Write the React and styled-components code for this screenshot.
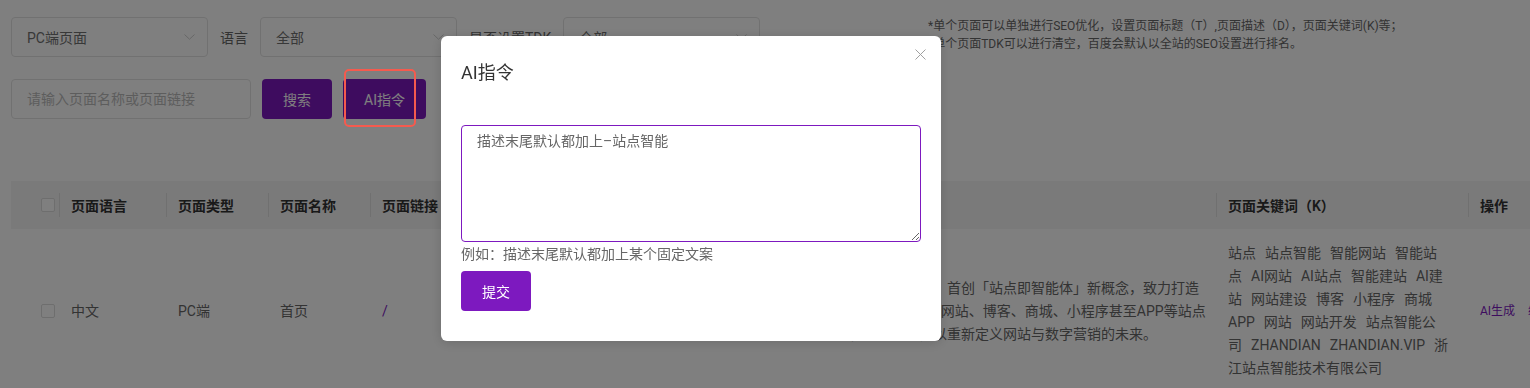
import React from 'react';
import styled, { createGlobalStyle } from 'styled-components';

const PURPLE = '#7d19bf';

const GlobalStyle = createGlobalStyle`
  html, body { margin: 0; padding: 0; background: #fff; overflow: hidden; }
  body { font-family: Roboto, "Noto Sans CJK SC", sans-serif; color: #666; }
  * { box-sizing: border-box; }
`;

const keywords = [
  '站点', '站点智能', '智能网站', '智能站点', 'AI网站', 'AI站点', '智能建站', 'AI建站',
  '网站建设', '博客', '小程序', '商城', 'APP', '网站', '网站开发', '站点智能公司',
  'ZHANDIAN', 'ZHANDIAN.VIP', '浙江站点智能技术有限公司',
];

// line breaks follow the way the cell wraps on the live page
const description = [
  '浙江站点智能技术有限公司旗下站点智能，首创「站点即智能体」新概念，致力打造',
  '以智能体为核心的第5代建站平台，让企业网站、博客、商城、小程序甚至APP等站点',
  '升级为可自主运营、持续进化的智能体，以重新定义网站与数字营销的未来。',
].join('\n');

function Chevron() {
  return (
    <svg width="11" height="6" viewBox="0 0 11 6" fill="none">
      <path d="M0.5 0.5L5.5 5.2L10.5 0.5" stroke="#cfcfcf" strokeWidth="1" />
    </svg>
  );
}

export default function App() {
  return (
    <>
      <GlobalStyle />
      <Page>
        <TopArea>
          <Filters>
            <FilterRow>
              <Select>PC端页面<Chevron /></Select>
              <Label>语言</Label>
              <Select>全部<Chevron /></Select>
              <Label>是否设置TDK</Label>
              <Select>全部<Chevron /></Select>
            </FilterRow>
            <SearchRow>
              <SearchInput placeholder="请输入页面名称或页面链接" />
              <PurpleButton $width={70}>搜索</PurpleButton>
              <PurpleButton $width={83}>AI指令</PurpleButton>
            </SearchRow>
          </Filters>
          <Notes>
            <div>*单个页面可以单独进行SEO优化，设置页面标题（T）,页面描述（D），页面关键词(K)等；</div>
            <div>*单个页面TDK可以进行清空，百度会默认以全站的SEO设置进行排名。</div>
          </Notes>
        </TopArea>

        <Table>
          <colgroup>
            <col style={{ width: 48 }} />
            <col style={{ width: 107 }} />
            <col style={{ width: 102 }} />
            <col style={{ width: 102 }} />
            <col style={{ width: 130 }} />
            <col style={{ width: 169 }} />
            <col style={{ width: 547 }} />
            <col style={{ width: 252 }} />
            <col style={{ width: 130 }} />
          </colgroup>
          <thead>
            <tr>
              <CheckTh><Checkbox /></CheckTh>
              <Th>页面语言</Th>
              <Th>页面类型</Th>
              <Th>页面名称</Th>
              <Th>页面链接</Th>
              <Th>页面标题（T）</Th>
              <Th>页面描述（D）</Th>
              <Th>页面关键词（K）</Th>
              <Th>操作</Th>
            </tr>
          </thead>
          <tbody>
            <tr>
              <CheckTd><Checkbox /></CheckTd>
              <Td>中文</Td>
              <Td>PC端</Td>
              <Td>首页</Td>
              <Td><LinkText>/</LinkText></Td>
              <Td>站点智能</Td>
              <DescTd>{description}</DescTd>
              <KeywordTd>
                {keywords.map((k) => (
                  <Keyword key={k}>{k}</Keyword>
                ))}
              </KeywordTd>
              <Td>
                <Action>AI生成</Action>
                <Action>编辑</Action>
              </Td>
            </tr>
          </tbody>
        </Table>
      </Page>

      <Mask>
        <Modal>
          <CloseButton aria-label="关闭">
            <svg width="11" height="11" viewBox="0 0 11 11">
              <path d="M0.5 0.5L10.5 10.5M10.5 0.5L0.5 10.5" stroke="#a0a0a0" strokeWidth="1" />
            </svg>
          </CloseButton>
          <ModalTitle>AI指令</ModalTitle>
          <Textarea defaultValue="描述末尾默认都加上–站点智能" />
          <Hint>例如：描述末尾默认都加上某个固定文案</Hint>
          <SubmitButton>提交</SubmitButton>
        </Modal>
      </Mask>

      <Highlight />
    </>
  );
}

const Page = styled.div`
  padding: 17px 0 0 11px;
  width: 1700px;
`;

const TopArea = styled.div`
  display: flex;
  align-items: flex-start;
`;

const Filters = styled.div`
  flex: 0 0 917px;
  display: flex;
  flex-direction: column;
  gap: 22px;
`;

const FilterRow = styled.div`
  display: flex;
  align-items: center;
`;

const Select = styled.div`
  width: 197px;
  height: 40px;
  border: 1px solid #e2e2e2;
  border-radius: 4px;
  display: flex;
  align-items: center;
  justify-content: space-between;
  padding: 0 12px 0 15px;
  font-size: 14px;
  color: #707070;
  background: #fff;
`;

const Label = styled.span`
  margin: 0 12px;
  font-size: 14px;
  color: #666;
`;

const SearchRow = styled.div`
  display: flex;
  gap: 11px;
`;

const SearchInput = styled.input`
  width: 240px;
  height: 40px;
  border: 1px solid #e2e2e2;
  border-radius: 4px;
  padding: 0 15px;
  font-family: inherit;
  font-size: 14px;
  color: #666;
  outline: none;
  &::placeholder { color: #bbb; }
`;

const PurpleButton = styled.button`
  width: ${(p) => p.$width}px;
  height: 40px;
  border: none;
  border-radius: 4px;
  background: ${PURPLE};
  color: #fff;
  font-family: inherit;
  font-size: 14px;
`;

const Notes = styled.div`
  font-size: 12px;
  line-height: 18px;
  color: #666;
`;

const Table = styled.table`
  margin-top: 62px;
  width: 1587px;
  table-layout: fixed;
  border-collapse: collapse;
`;

const Th = styled.th`
  position: relative;
  height: 48px;
  padding: 0 12px;
  background: #f5f5f5;
  text-align: left;
  font-size: 14px;
  font-weight: 600;
  color: #333;
  white-space: nowrap;
  overflow: hidden;
  &::before {
    content: '';
    position: absolute;
    left: 0;
    top: 12px;
    width: 1px;
    height: 24px;
    background: #e0e0e0;
  }
`;

const CheckTh = styled.th`
  height: 48px;
  padding: 0 0 0 30px;
  background: #f5f5f5;
  text-align: left;
`;

const Checkbox = styled.span`
  display: block;
  width: 14px;
  height: 14px;
  border: 1px solid #dcdcdc;
  border-radius: 2px;
  background: #fff;
`;

const Td = styled.td`
  padding: 13px 12px;
  vertical-align: middle;
  font-size: 14px;
  line-height: 23px;
  color: #666;
`;

const CheckTd = styled.td`
  padding: 0 0 0 30px;
  vertical-align: middle;
`;

const DescTd = styled(Td)`
  padding-right: 0;
  white-space: pre;
`;

const KeywordTd = styled(Td)`
  padding-right: 16px;
`;

const Keyword = styled.span`
  margin-right: 9px;
`;

const LinkText = styled.span`
  color: ${PURPLE};
`;

const Action = styled.span`
  font-size: 12px;
  color: ${PURPLE};
  margin-right: 13px;
`;

const Mask = styled.div`
  position: fixed;
  inset: 0;
  background: rgba(0, 0, 0, 0.5);
  padding: 36px 0 0 441px;
`;

const Modal = styled.div`
  position: relative;
  width: 500px;
  padding: 25px 20px 30px;
  background: #fff;
  border-radius: 6px;
  box-shadow: 0 2px 12px rgba(0, 0, 0, 0.15);
`;

const CloseButton = styled.button`
  position: absolute;
  top: 13px;
  right: 15px;
  padding: 0;
  border: none;
  background: none;
  line-height: 0;
`;

const ModalTitle = styled.h3`
  margin: 0;
  font-size: 18px;
  line-height: 24px;
  font-weight: 400;
  color: #333;
`;

const Textarea = styled.textarea`
  display: block;
  width: 460px;
  height: 117px;
  margin-top: 40px;
  padding: 5px 15px;
  border: 1px solid ${PURPLE};
  border-radius: 4px;
  font-family: inherit;
  font-size: 14px;
  line-height: 20px;
  color: #666;
  outline: none;
`;

const Hint = styled.div`
  font-size: 14px;
  line-height: 24px;
  color: #666;
`;

const SubmitButton = styled.button`
  display: block;
  margin-top: 5px;
  width: 70px;
  height: 40px;
  border: none;
  border-radius: 4px;
  background: ${PURPLE};
  color: #fff;
  font-family: inherit;
  font-size: 14px;
`;

const Highlight = styled.div`
  position: fixed;
  left: 344px;
  top: 69px;
  width: 72px;
  height: 58px;
  border: 2px solid #f55a4e;
  border-radius: 5px;
  pointer-events: none;
`;
